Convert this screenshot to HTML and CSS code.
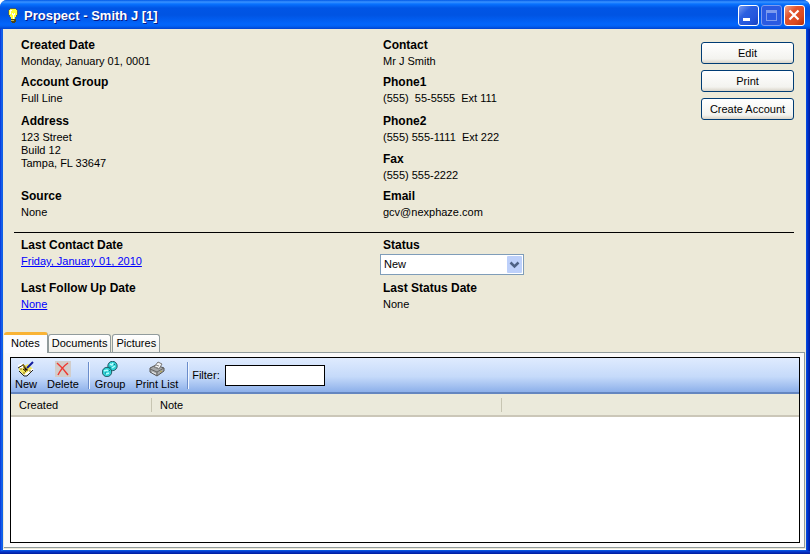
FILE: index.html
```html
<!DOCTYPE html>
<html lang="en">
<head>
<meta charset="utf-8">
<title>Prospect - Smith J [1]</title>
<link rel="stylesheet" href="styles.css">
</head>
<body>
<div class="window">
  <header class="titlebar">
    <svg class="bulb" width="12" height="16" viewBox="0 0 12 16" shape-rendering="crispEdges" aria-hidden="true">
      <path d="M3 0h6v1H3zM2 1h1v1H2zM9 1h1v1H9zM1 2h1v5H1zM10 2h1v5h-1zM2 7h1v2H2zM9 7h1v2H9z" fill="#4a5a66"/>
      <path d="M3 1h6v1h1v5H9v2H8v2H4V9H3V7H2V2h1z" fill="#ffff38"/>
      <path d="M3 2h2v1H4v3H3zM5 5h1v1h1V5h1v2H7v4H6V7H5z" fill="#fff"/>
      <path d="M4 11h5v3H8v1H5v-1H4z" fill="#4c4519"/>
      <path d="M4 12h3v1H4z" fill="#c9b84b"/>
    </svg>
    <h1 class="title">Prospect - Smith J [1]</h1>
    <div class="window-controls">
      <button class="control" type="button" aria-label="Minimize"><svg width="21" height="21" viewBox="0 0 21 21"><path d="M5 13h7v3H5z" fill="#fff"/></svg></button>
      <button class="control control-off" type="button" aria-label="Maximize" disabled><svg width="21" height="21" viewBox="0 0 21 21"><path d="M5 5h11v11H5zM6 8v7h9V8z" fill="#7d9bee" fill-rule="evenodd"/></svg></button>
      <button class="control control-close" type="button" aria-label="Close"><svg width="21" height="21" viewBox="0 0 21 21"><path d="M5.500 5.500l9 9M14.500 5.500l-9 9" stroke="#fff" stroke-width="2.200"/></svg></button>
    </div>
  </header>

  <main class="content">
    <section class="summary">
      <dl class="details">
        <div class="field"><dt>Created Date</dt><dd>Monday, January 01, 0001</dd></div>
        <div class="field"><dt>Contact</dt><dd>Mr J Smith</dd></div>
        <div class="field"><dt>Account Group</dt><dd>Full Line</dd></div>
        <div class="field"><dt>Phone1</dt><dd>(555)&nbsp; 55-5555&nbsp; Ext 111</dd></div>
        <div class="field field-tall"><dt>Address</dt><dd>123 Street<br>Build 12<br>Tampa, FL 33647</dd></div>
        <div class="field"><dt>Phone2</dt><dd>(555) 555-1111&nbsp; Ext 222</dd></div>
        <div class="field"><dt>Fax</dt><dd>(555) 555-2222</dd></div>
        <div class="field"><dt>Source</dt><dd>None</dd></div>
        <div class="field"><dt>Email</dt><dd>gcv@nexphaze.com</dd></div>
      </dl>
      <div class="actions">
        <button type="button" class="action">Edit</button>
        <button type="button" class="action">Print</button>
        <button type="button" class="action">Create Account</button>
      </div>
    </section>

    <hr class="rule">

    <section class="tracking">
      <div class="field"><span class="label">Last Contact Date</span><a class="value" href="#contact">Friday, January 01, 2010</a></div>
      <div class="field">
        <label class="label" for="status">Status</label>
        <div class="dropdown">
          <select id="status"><option>New</option></select>
          <svg class="dropdown-arrow" width="15" height="17" viewBox="0 0 15 17" aria-hidden="true"><rect width="15" height="17" rx="1" fill="#bdd0fa"/><path d="M3.500 6.500l4 4 4-4" fill="none" stroke="#4d6185" stroke-width="2.500"/></svg>
        </div>
      </div>
      <div class="field"><span class="label">Last Follow Up Date</span><a class="value" href="#follow-up">None</a></div>
      <div class="field"><span class="label">Last Status Date</span><span class="value">None</span></div>
    </section>

    <div class="tabs" role="tablist">
      <button type="button" class="tab tab-active" role="tab" aria-selected="true">Notes</button>
      <button type="button" class="tab" role="tab" aria-selected="false">Documents</button>
      <button type="button" class="tab" role="tab" aria-selected="false">Pictures</button>
    </div>

    <section class="page" role="tabpanel" aria-label="Notes">
      <div class="panel">
        <div class="toolbar">
          <button type="button" class="tool">
            <svg width="16" height="16" viewBox="0 0 16 16" aria-hidden="true">
              <path d="M1 5l4-2 1 2 4-2 5 5-6 6H6L1 9z" fill="#f0e65a"/>
              <path d="M0 5l5-2M2 7l4-2M7 14l8-6" stroke="#fff" stroke-width="2"/>
              <path d="M0 7l5-3M1 10l5 5h3l6-6M5 8l3 3" fill="none" stroke="#222"/>
              <path d="M9 7l6-6" stroke="#121c9d" stroke-width="2"/>
              <path d="M5 3l3 4 2 2-3 1zM2 8h2M5 12h2M11 10h2" fill="#111" stroke="#8c6c12"/>
            </svg>New</button>
          <button type="button" class="tool">
            <svg width="16" height="16" viewBox="0 0 16 16" aria-hidden="true"><path d="M0 0h16v16H0z" fill="#d2cdca"/><path d="M2 2q6 5 11 12M13 2Q7 6 3 14" fill="none" stroke="#ee3932" stroke-width="1.500"/></svg>Delete</button>
          <span class="divider"></span>
          <button type="button" class="tool">
            <svg width="16" height="16" viewBox="0 0 16 16" aria-hidden="true">
              <circle cx="10.500" cy="5" r="4.700" fill="#2fd0d4" stroke="#123c48" stroke-width=".8"/><circle cx="5" cy="11" r="4.700" fill="#2fd0d4" stroke="#123c48" stroke-width=".8"/>
              <path d="M8 3l2 1 1-2M10 7l3-2M2 10l3-1 1 1M4 13l3-1" fill="none" stroke="#b4ffff" stroke-width="1.500"/>
              <path d="M7 6l2 1M12 3l1 1M3 12h1M7 9l1 1" stroke="#087a88"/>
            </svg>Group</button>
          <button type="button" class="tool">
            <svg width="16" height="16" viewBox="0 0 16 16" aria-hidden="true">
              <path d="M1 7l6-3 8 3v3l-7 5-7-4z" fill="#a7a9aa" stroke="#555"/>
              <path d="M5 6l4-5 4 2-3 5z" fill="#f3f3f3" stroke="#777"/>
              <path d="M7 4l3 1M6 6l3 1" stroke="#888"/>
              <path d="M1 8l7 3 7-4M8 11v4" fill="none" stroke="#666"/><path d="M3 11l4 2" stroke="#eee"/><path d="M11 11l2-1" stroke="#b7aa43"/>
            </svg>Print List</button>
          <span class="divider"></span>
          <label class="filter-label" for="filter">Filter:</label>
          <input class="filter" id="filter" type="text">
        </div>
        <table class="notes">
          <colgroup><col class="col-created"><col class="col-note"><col></colgroup>
          <thead><tr><th scope="col">Created</th><th scope="col">Note</th><td></td></tr></thead>
        </table>
      </div>
    </section>
  </main>
</div>
</body>
</html>
```
FILE: styles.css
```css
* { box-sizing: border-box; }

body {
  margin: 0;
  background: #fff;
  color: #000;
  font: 11px/13px "Liberation Sans", Arial, sans-serif;
}

button, input, select { font: inherit; color: inherit; }

.window {
  display: flex;
  flex-direction: column;
  min-height: 100vh;
  padding: 0 4px 4px 3px;
  border-radius: 7px 7px 0 0;
  background:
    linear-gradient(#0840d8, #001a9c) bottom / 100% 3px no-repeat,
    linear-gradient(90deg, #0831d9 0, #166aee 2px, #0855dd 3px, #0855dd calc(100% - 4px), #003bda calc(100% - 3px), #001a9c 100%);
}

.titlebar {
  display: flex;
  align-items: center;
  height: 29px;
  margin: 0 -4px 0 -3px;
  padding: 2px 5px 0 7px;
  border-radius: 7px 7px 0 0;
  background: linear-gradient(#0058e6 0, #3a93ff 2px, #0872ff 4px, #0055e5 8px, #0054e3 15px, #0265fb 24px, #0262f5 26px, #0043cf 29px);
}

.title {
  flex: 1;
  margin: 0 0 0 5px;
  color: #fff;
  font: bold 13px/18px "Liberation Sans", Arial, sans-serif;
  text-shadow: 1px 1px #0a1883;
}

.window-controls { display: flex; gap: 2px; }

.control {
  display: flex;
  width: 21px;
  height: 21px;
  padding: 0;
  border: 1px solid #fff;
  border-radius: 3px;
  background: linear-gradient(135deg, #7a9bf0, #2b5fe0 35%, #2455dc 70%, #1941bf);
}
.control svg { margin: -1px; flex: none; }
.control-off { border-color: #7d9bee; background: #2a5ae2; }
.control-close { background: linear-gradient(135deg, #f0a38a, #e2542d 35%, #dc4a20 70%, #b52e08); }

.content {
  flex: 1;
  display: flex;
  flex-direction: column;
  padding: 8px 1px 1px;
  border-bottom: 1px solid #fff;
  background: #ece9d8;
}

.summary { display: flex; padding: 0 11px 0 17px; }

.details, .tracking {
  display: grid;
  grid-template-columns: 362fr 318fr;
  flex: 1;
  margin: 0;
}
.details { grid-template-rows: 37px 39px 38px 37px 32px; }
.field-tall { grid-row: span 2; }

dt, .label {
  display: block;
  font-size: 12px;
  line-height: 16px;
  font-weight: bold;
}
dd, .value { display: block; margin: 0; padding: 2px 0 1px; }
a.value { width: max-content; color: #00f; text-decoration: underline; }

.actions {
  display: flex;
  flex-direction: column;
  gap: 6px;
  padding-top: 5px;
}
.action {
  width: 93px;
  height: 22px;
  padding: 0;
  border: 1px solid #003c74;
  border-radius: 3px;
  background: linear-gradient(#fff, #f3f3ef 80%, #d9d4c9);
}

.rule {
  width: auto;
  margin: 12px 11px 4px 10px;
  border: 0;
  border-top: 1px solid #000;
  align-self: stretch;
}

.tracking {
  flex: none;
  grid-template-columns: 362fr 411fr;
  grid-template-rows: 43px 32px;
  padding: 0 11px 0 17px;
}

.dropdown { position: relative; width: 144px; margin: 1px 0 0 -3px; }
.dropdown select {
  display: block;
  appearance: none;
  width: 100%;
  height: 21px;
  padding: 0 20px 0 3px;
  border: 1px solid #7f9db9;
  border-radius: 0;
  background: #fff;
}
.dropdown-arrow { position: absolute; top: 2px; right: 2px; pointer-events: none; }

.tabs { display: flex; align-items: flex-end; margin-top: 20px; }
.tab {
  height: 18px;
  padding: 0 3px;
  border: 1px solid #919b9c;
  border-bottom: 0;
  border-radius: 3px 3px 0 0;
  background: linear-gradient(#fff, #f1f0ea);
}
.tab + .tab + .tab { margin-left: 1px; }
.tab-active {
  position: relative;
  height: 21px;
  margin-bottom: -1px;
  padding: 0 7px 2px;
  border-left: 0;
  border-top: 3px solid #f9b335;
  background: #fcfcfe;
}

.page {
  flex: 1;
  display: flex;
  padding: 4px;
  padding-left: 6px;
  border: 1px solid #919b9c;
  border-left: 0;
  background: #fbfafa;
}

.panel {
  flex: 1;
  border: 1px solid #000;
  background: #fff;
}

.toolbar {
  display: flex;
  align-items: center;
  height: 36px;
  border-bottom: 2px solid #6486c0;
  background: linear-gradient(#dfebfe, #c5dafa 55%, #8db0ea);
}
.tool {
  display: flex;
  flex-direction: column;
  align-items: center;
  gap: 1px;
  padding: 2px 4px 0;
  border: 0;
  background: none;
}
.tool + .tool { padding-left: 6px; }
.divider {
  width: 2px;
  height: 27px;
  margin: 0 1px 0 5px;
  border-left: 1px solid #6a8ccb;
  border-right: 1px solid #f1f7ff;
}
.filter-label { margin: 0 5px 0 2px; }
.filter {
  width: 100px;
  height: 21px;
  padding: 0 3px;
  border: 1px solid #000;
  background: #fff;
}

.notes { width: 100%; table-layout: fixed; border-collapse: collapse; }
.col-created { width: 141px; }
.col-note { width: 350px; }
.notes th, .notes td {
  height: 22px;
  padding: 1px 8px 0;
  border-bottom: 2px solid #cbc7b8;
  background: linear-gradient(#c7c5b2, #c7c5b2) right center / 1px 14px no-repeat, #ebeadb;
  font-weight: normal;
  text-align: left;
}
.notes td { background: #ebeadb; }
```
